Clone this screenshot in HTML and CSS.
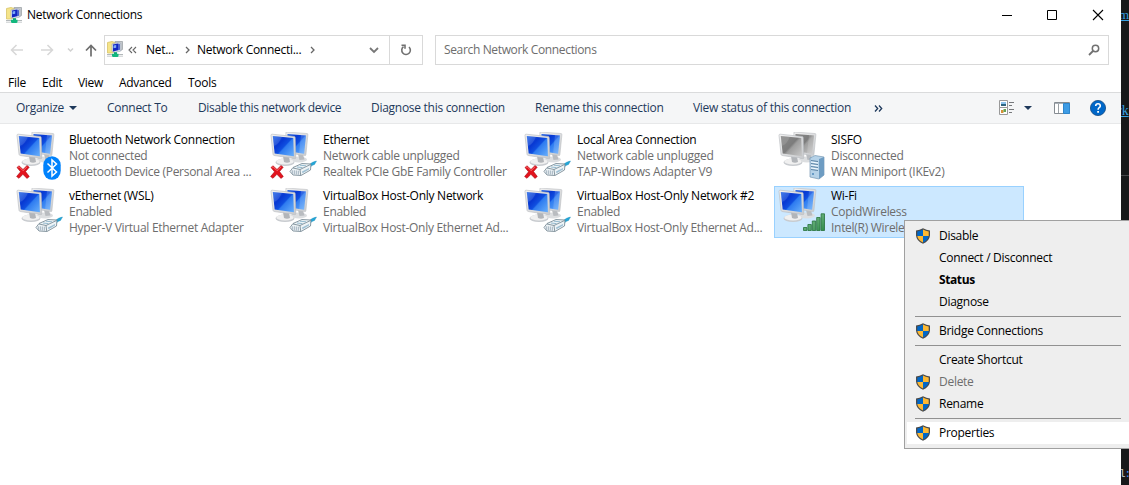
FILE: index.html
```html
<!DOCTYPE html>
<html lang="en">
<head>
<meta charset="utf-8">
<title>Network Connections</title>
<link rel="stylesheet" href="styles.css">
</head>
<body>
<svg class="defs" width="0" height="0" aria-hidden="true">
  <defs>
    <linearGradient id="blue" x1="0" y1="0" x2="1" y2=".9"><stop offset="0" stop-color="#2a6ce8"/><stop offset=".35" stop-color="#0838d2"/><stop offset=".55" stop-color="#0f4fe0"/><stop offset=".6" stop-color="#2e7bf0"/><stop offset="1" stop-color="#62aafa"/></linearGradient>
    <linearGradient id="gray" x1="0" y1="0" x2="1" y2=".9"><stop offset="0" stop-color="#8a8a8a"/><stop offset=".5" stop-color="#7c7c7c"/><stop offset=".58" stop-color="#9e9e9e"/><stop offset="1" stop-color="#c4c4c4"/></linearGradient>
    <linearGradient id="frame" x1="0" y1="0" x2="1" y2="1"><stop offset="0" stop-color="#f2f2f2"/><stop offset="1" stop-color="#c8cacd"/></linearGradient>
    <linearGradient id="green" x1="0" y1="0" x2="1" y2="1"><stop offset="0" stop-color="#8fcb9d"/><stop offset="1" stop-color="#2f8a4a"/></linearGradient>
    <symbol id="monitors" viewBox="0 0 48 48">
      <ellipse cx="29" cy="27.500" rx="8" ry="3" fill="#dcdee0"/>
      <path d="M28 22l5 .5 1.500 5-5 .5z" fill="#b9bcc0"/>
      <path d="M16 0l21 1.500q1 .1.900 1.200l-2 20q-.1 1-1.200.9L15 20.500z" fill="url(#frame)" stroke="#bcbfc3" stroke-width=".6"/>
      <path d="M17.500 2l18.500 1.400-1.900 18.300-17.600-2.700z" fill="var(--screen)"/>
      <path d="M31 3.100l5 .4-1.900 18.200-5-.8z" fill="#fff" opacity=".15"/>
      <ellipse cx="15" cy="30.300" rx="9.500" ry="3.700" fill="#c9ccd0"/>
      <ellipse cx="15" cy="29.500" rx="8.700" ry="3" fill="#f0f0f0"/>
      <path d="M13 24l6 .7 1 5.300q-3 1.500-6 0z" fill="#b2b5b9"/>
      <path d="M2.200 2.200l22 2.300q1 .1 1 1.100l.6 20q0 1.200-1.200 1L4.200 23.500q-1-.2-1.200-1.200L1 3.300q0-1.200 1.200-1.100z" fill="url(#frame)" stroke="#b6b9bd" stroke-width=".6"/>
      <path d="M2.800 3.900l20.500 2.200.6 18.200L4.700 21.600z" fill="var(--screen)"/>
      <path d="M2.800 3.900l9 1q-2.500 7-8 9z" fill="#fff" opacity=".12"/>
    </symbol>
    <symbol id="cross" viewBox="0 0 14 14">
      <path d="M1 2.500L3 .8 7 4.500 11 .6 13.200 2.200 9.500 6.600 13.300 11.500 11 13.400 6.900 9.300 3 13.300.6 11.500 4.600 6.800z" fill="#e3131d" stroke="#a90610" stroke-width=".6"/>
      <path d="M2 2.500L3 1.700 7 5.700 11.200 1.600" fill="none" stroke="#ff7b7b" stroke-width=".8"/>
    </symbol>
    <symbol id="plug" viewBox="0 0 28 18">
      <path d="M19 6q4-4.500 8.500-5L25.500 4.500Q22.500 5 21 7.500z" fill="#24a7d8" stroke="#178ab8" stroke-width=".4"/>
      <path d="M1 11.500L4 7.500 13 3.500l9 .5-.5 6L12 15.500 4 15z" fill="#edf3f6" stroke="#6f818d" stroke-width=".8"/>
      <path d="M11 9.500L21.500 4.500M11 9.500l.7 5.500M11 9.500L4 8" fill="none" stroke="#6f818d" stroke-width=".8"/>
      <path d="M3.300 10.300v3.500M5.300 10.300v4M7.300 10.500v4M9.300 10.700v4" stroke="#8da0ae" stroke-width=".8"/>
      <path d="M8 7l5.500.6M11 5.200l6 .6" fill="none" stroke="#8ab3ca" stroke-width=".9"/>
      <path d="M13 11.500l7-3.500v1.600l-6.500 3.600z" fill="#9fc0d3"/>
    </symbol>
    <symbol id="bluetooth" viewBox="0 0 18 24"><rect x=".3" y=".2" width="17.400" height="23.600" rx="8.700" ry="9" fill="#0082fc"/><path d="M4.500 7.500l9 8.500L9 20V4l4.500 4-9 8.500" fill="none" stroke="#fff" stroke-width="1.500"/></symbol>
    <symbol id="server" viewBox="0 0 16 25">
      <path d="M1 3l5-2.500L15 2v18l-5 4-9-2z" fill="#b5d2e8" stroke="#7596b2" stroke-width=".7"/>
      <path d="M10 4l5-2v18l-5 4z" fill="#6e9cc2"/>
      <path d="M2 5.500l7 1M2 8.500l7 1M2 11.500l7 1M2 14.500l7 1" stroke="#5d84a5"/>
      <path d="M2 7l7 1M2 10l7 1M2 13l7 1" stroke="#f3faff"/>
      <circle cx="4" cy="19" r="1" fill="#4f89bb"/>
    </symbol>
    <symbol id="signal" viewBox="0 0 22 18"><g fill="url(#green)" stroke="#24713a" stroke-width=".8"><path d="M.5 14.500h3.400v3H.5zM4.900 11.500h3.400v6H4.900zM9.300 8h3.400v9.500H9.300zM13.700 4.500h3.400v13h-3.400zM18.100.8h3.400v16.700h-3.400z"/></g></symbol>
    <symbol id="shield" viewBox="0 0 16 16">
      <path d="M8 .3Q4.500 2.300 1 2.500v5Q1.500 13 8 15.800 14.500 13 15 7.500v-5Q11.500 2.300 8 .3z" fill="#4b4b4b"/>
      <path d="M8 1.500Q5.300 3.200 2.300 3.600v4.300H8z" fill="#0067c8"/><path d="M8 1.500q2.700 1.700 5.700 2.100v4.300H8z" fill="#fdb933"/>
      <path d="M2.300 7.900Q3 12.300 8 14.500V7.900z" fill="#fdb933"/><path d="M13.700 7.900Q13 12.300 8 14.500V7.900z" fill="#0067c8"/>
    </symbol>
    <symbol id="netfolder" viewBox="0 0 16 16">
      <path d="M8 .5h7.500v8l-3 1.500z" fill="#c5c9cd" stroke="#a0a4a8" stroke-width=".8"/>
      <path d="M.5 1.500L5 .5l3 1v9l-3 1.500H.5z" fill="#f5e489" stroke="#d8c468" stroke-width=".8"/>
      <path d="M5 3l6-1.500 2.800 1V10L8 11.500 5 10.500z" fill="#d9dee6" stroke="#9ba4b5" stroke-width=".6"/>
      <path d="M6 3.600l5-1.100v6.700l-5 1.200z" fill="#1226c2"/><path d="M6.500 4.500l2.700-.6v2.800l-2.700.6z" fill="#7fabf8"/><path d="M11 2.500l2 .7v5.500l-2 .5z" fill="#4860cf"/>
      <path d="M7 11.200h3v2H7z" fill="#10a974"/><path d="M0 13h16v.9H0zM0 14.700h16v.8H0z" fill="#b2b8ba"/><path d="M5 12.800h6.500v2.400L10.500 16H6l-1-.8z" fill="#12b77d"/>
    </symbol>
  </defs>
</svg>
<div class="desktop">
  <main class="window">
    <header class="titlebar">
      <svg class="app-icon"><use href="#netfolder"/></svg>
      <span class="title">Network Connections</span>
      <svg class="controls" viewBox="0 0 104 12"><path d="M0 6.500h10" stroke="#000"/><path d="M45.500 1.500h9v9h-9z" fill="none" stroke="#000"/><path d="M91 1l10 10M101 1L91 11" stroke="#000" stroke-width="1.100"/></svg>
    </header>
    <nav class="address-row">
      <svg class="arrows" viewBox="0 0 92 14" fill="none">
        <path d="M13 7H1.500M6.500 2L1.500 7l5 5M31 7h11.500M37.500 2l5 5-5 5" stroke="#d7d7d7" stroke-width="1.500"/>
        <path d="M58 5.500l2.500 2.500L63 5.500" stroke="#d1d1d1" stroke-width="1.500"/>
        <path d="M81 13.500v-11M76 7.500l5-5 5 5" stroke="#6e6e6e" stroke-width="1.700"/>
      </svg>
      <div class="address">
        <svg class="app-icon"><use href="#netfolder"/></svg>
        <svg class="back-chev" viewBox="0 0 9 8"><path d="M4 1L1 4l3 3M8 1L5 4l3 3" fill="none" stroke="#666" stroke-width="1.100"/></svg>
        <span class="crumb-short">Net...</span>
        <svg class="chev" viewBox="0 0 5 8"><path d="M1 1l3 3-3 3" fill="none" stroke="#666" stroke-width="1.300"/></svg>
        <span class="crumb">Network Connecti...</span>
        <svg class="chev" viewBox="0 0 5 8"><path d="M1 1l3 3-3 3" fill="none" stroke="#666" stroke-width="1.300"/></svg>
        <svg class="drop" viewBox="0 0 10 7"><path d="M1 1l4 4 4-4" fill="none" stroke="#777" stroke-width="1.800"/></svg>
        <div class="refresh"><svg viewBox="0 0 12 12"><path d="M3.500 2.700A4.300 4.300 0 1 0 9 3M1.500 1.300h3.500v3.500" fill="none" stroke="#717171" stroke-width="1.600"/></svg></div>
      </div>
      <div class="search"><span>Search Network Connections</span><svg viewBox="0 0 12 12"><path d="M1 11l4-4" stroke="#717171" stroke-width="1.800"/><circle cx="7.500" cy="4.500" r="3.200" fill="none" stroke="#717171" stroke-width="1.500"/></svg></div>
    </nav>
    <nav class="menubar"><span class="m-file">File</span><span class="m-edit">Edit</span><span class="m-view">View</span><span class="m-adv">Advanced</span><span>Tools</span></nav>
    <div class="toolbar">
      <div class="command c-org"><span>Organize</span><svg class="triangle" viewBox="0 0 8 4"><path d="M0 0h8L4 4z" fill="#1e395b"/></svg></div>
      <span class="command c-con">Connect To</span><span class="command c-dis">Disable this network device</span><span class="command c-dia">Diagnose this connection</span><span class="command c-ren">Rename this connection</span><span class="command c-view">View status of this connection</span>
      <svg class="more" viewBox="0 0 9 7"><path d="M1 .5l2.700 3L1 6.500M5 .5l2.700 3L5 6.500" fill="none" stroke="#1e395b" stroke-width="1.300"/></svg>
      <svg class="view-icon" viewBox="0 0 16 16"><path d="M.5.500h8v7h-8zM.5 7.500h8v7h-8z" fill="#fff" stroke="#999"/><path d="M2 2h5v2H2z" fill="#8dc4ee"/><path d="M2 4h5v2H2z" fill="#2e6580"/><path d="M2 10h2.500v3H2z" fill="#d69037"/><path d="M4.500 9H7v3H4.500z" fill="#64a454"/><path d="M10 2.500h5M10 5.500h3M10 9.500h5M10 12.500h3" stroke="#77797c"/></svg>
      <svg class="triangle view-tri" viewBox="0 0 8 4"><path d="M0 0h8L4 4z" fill="#1e395b"/></svg>
      <svg class="pane" viewBox="0 0 16 12"><path d="M.5.500h15v11H.5z" fill="#fff" stroke="#858b91"/><path d="M1 1.500h14" stroke="#a9b0b7"/><path d="M4.500 2v9" stroke="#9ba1a6"/><path d="M9.500 1.500h6v10h-6z" fill="#3e9ce5" stroke="#2f86cc"/></svg>
      <svg class="help" viewBox="0 0 16 16"><circle cx="8" cy="8" r="7.600" fill="#0067c8" stroke="#174b82" stroke-width=".8"/><path d="M5.700 6Q5.700 3.800 8 3.800T10.300 6Q10.300 7 9.200 7.700T8.100 9.700" fill="none" stroke="#fff" stroke-width="1.600"/><path d="M7.200 11h1.800v1.800H7.200z" fill="#fff"/></svg>
    </div>
    <section class="connections">
      <article class="item"><svg class="net-icon" viewBox="0 0 48 48"><use href="#monitors" width="48" height="48"/><use href="#cross" y="33" width="14" height="14"/><use href="#bluetooth" x="27" y="24" width="18" height="24"/></svg><div class="info"><b>Bluetooth Network Connection</b><span>Not connected</span><span>Bluetooth Device (Personal Area ...</span></div></article>
      <article class="item"><svg class="net-icon" viewBox="0 0 48 48"><use href="#monitors" width="48" height="48"/><use href="#cross" y="33" width="14" height="14"/><use href="#plug" x="19" y="28" width="28" height="18"/></svg><div class="info"><b>Ethernet</b><span>Network cable unplugged</span><span>Realtek PCIe GbE Family Controller</span></div></article>
      <article class="item"><svg class="net-icon" viewBox="0 0 48 48"><use href="#monitors" width="48" height="48"/><use href="#cross" y="33" width="14" height="14"/><use href="#plug" x="19" y="28" width="28" height="18"/></svg><div class="info"><b>Local Area Connection</b><span>Network cable unplugged</span><span>TAP-Windows Adapter V9</span></div></article>
      <article class="item disconnected"><svg class="net-icon" viewBox="0 0 48 48"><use href="#monitors" width="48" height="48"/><use href="#server" x="31" y="23" width="16" height="25"/></svg><div class="info"><b>SISFO</b><span>Disconnected</span><span>WAN Miniport (IKEv2)</span></div></article>
      <article class="item"><svg class="net-icon" viewBox="0 0 48 48"><use href="#monitors" width="48" height="48"/><use href="#plug" x="19" y="28" width="28" height="18"/></svg><div class="info"><b>vEthernet (WSL)</b><span>Enabled</span><span>Hyper-V Virtual Ethernet Adapter</span></div></article>
      <article class="item"><svg class="net-icon" viewBox="0 0 48 48"><use href="#monitors" width="48" height="48"/><use href="#plug" x="19" y="28" width="28" height="18"/></svg><div class="info"><b>VirtualBox Host-Only Network</b><span>Enabled</span><span>VirtualBox Host-Only Ethernet Ad...</span></div></article>
      <article class="item"><svg class="net-icon" viewBox="0 0 48 48"><use href="#monitors" width="48" height="48"/><use href="#plug" x="19" y="28" width="28" height="18"/></svg><div class="info"><b>VirtualBox Host-Only Network #2</b><span>Enabled</span><span>VirtualBox Host-Only Ethernet Ad...</span></div></article>
      <article class="item selected"><svg class="net-icon" viewBox="0 0 48 48"><use href="#monitors" width="48" height="48"/><use href="#signal" x="25" y="25" width="22" height="18"/></svg><div class="info"><b>Wi-Fi</b><span>CopidWireless</span><span>Intel(R) Wireless</span></div></article>
    </section>
  </main>
  <aside class="behind"><span class="link link-a">m</span><span class="link link-b">rk</span><i class="rule"></i><span class="code">l<em>:</em></span></aside>
  <div class="context-menu">
    <div class="option"><svg><use href="#shield"/></svg><span>Disable</span></div>
    <div class="option"><i></i><span>Connect / Disconnect</span></div>
    <div class="option default"><i></i><span>Status</span></div>
    <div class="option"><i></i><span>Diagnose</span></div>
    <hr>
    <div class="option"><svg><use href="#shield"/></svg><span>Bridge Connections</span></div>
    <hr>
    <div class="option"><i></i><span>Create Shortcut</span></div>
    <div class="option disabled"><svg><use href="#shield"/></svg><span>Delete</span></div>
    <div class="option"><svg><use href="#shield"/></svg><span>Rename</span></div>
    <hr>
    <div class="option hover"><svg><use href="#shield"/></svg><span>Properties</span></div>
  </div>
</div>
</body>
</html>
```
FILE: styles.css
```css
* { box-sizing: border-box; }
body { margin: 0; overflow: hidden; font: 12px/16px "Open Sans", "Noto Sans", sans-serif; letter-spacing: -.28px; color: #000; }
svg { display: block; flex: none; }
.defs { position: absolute; }
.desktop { position: relative; display: flex; width: 1129px; height: 485px; overflow: hidden; background: #17181a; }
.window { flex: none; width: 1121px; background: #fff; white-space: nowrap; }
.app-icon { width: 16px; height: 16px; }
.titlebar { display: flex; align-items: center; height: 29px; padding: 0 15px 0 6px; }
.title { margin-left: 5px; flex: 1; padding-top: 1px; }
.controls { width: 104px; height: 12px; }
.address-row { display: flex; align-items: center; height: 42px; padding: 0 12px 0 10px; }
.arrows { width: 92px; height: 14px; margin-right: 2px; }
.address { display: flex; align-items: center; width: 319px; height: 30px; border: 1px solid #d9d9d9; padding-left: 2px; }
.address .app-icon { margin-top: -2px; }
.back-chev { width: 9px; height: 8px; margin-left: 5px; }
.crumb-short { width: 28px; margin: 0 11px 0 9px; }
.chev { width: 5px; height: 8px; }
.crumb { width: 105px; margin: 0 8px 0 7px; }
.drop { width: 10px; height: 7px; margin-left: auto; }
.refresh { display: grid; place-items: center; width: 33px; height: 28px; margin-left: 10px; border-left: 1px solid #d9d9d9; }
.refresh svg { width: 12px; height: 12px; }
.search { display: flex; align-items: center; justify-content: space-between; flex: 1; height: 30px; margin-left: 12px; padding: 0 8px; border: 1px solid #d9d9d9; letter-spacing: -.35px; color: #6d6d6d; }
.search svg { width: 12px; height: 12px; }
.menubar { display: flex; height: 21px; padding: 4px 8px 0; }
.m-file { width: 34px; } .m-edit { width: 36px; } .m-view { width: 41px; } .m-adv { width: 69px; }
.toolbar { display: flex; align-items: center; height: 32px; padding: 0 15px 0 16px; background: #f5f6f7; border-top: 1px solid #dadbdc; border-bottom: 1px solid #e7e8e9; color: #1e395b; }
.command { flex: none; }
.c-org { display: flex; align-items: center; justify-content: space-between; width: 61px; margin-right: 30px; }
.triangle { width: 8px; height: 4px; }
.c-con { width: 91px; } .c-dis { width: 173px; letter-spacing: -.35px; } .c-dia { width: 164px; } .c-ren { width: 158px; } .c-view { width: 181px; }
.more { width: 9px; height: 7px; }
.view-icon { width: 16px; height: 16px; margin-left: auto; }
.view-tri { margin: 0 22px 0 9px; }
.pane { width: 16px; height: 12px; margin-right: 20px; }
.help { width: 16px; height: 16px; }
.connections { display: grid; grid-template-columns: repeat(4, 250px); grid-auto-rows: 52px; gap: 4px; padding: 6px 0 0 12px; }
.item { --screen: url(#blue); display: flex; padding: 2px 0 0 4px; overflow: hidden; }
.item.disconnected { --screen: url(#gray); }
.item.selected { background: #cce8ff; outline: 1px solid #99d1ff; outline-offset: -1px; }
.net-icon { width: 48px; height: 48px; }
.info { display: flex; flex-direction: column; margin-left: 5px; letter-spacing: -.29px; color: #6d6d6d; }
.info b { font-weight: 400; letter-spacing: -.26px; color: #000; }
.behind { position: relative; width: 8px; overflow: hidden; font: 15px/18px "Liberation Serif", serif; letter-spacing: 0; color: #36a1e4; }
.link { position: absolute; text-decoration: underline; }
.link-a { top: 6px; left: -2px; font-size: 13px; } .link-b { top: 102px; left: -4px; font-size: 14px; }
.rule { position: absolute; top: 175px; width: 8px; height: 1px; background: #45474a; }
.code { position: absolute; top: 466px; left: -2px; font: 11px/16px "Liberation Mono", monospace; letter-spacing: -1px; color: #ccc; white-space: nowrap; }
.code em { color: #448cff; font-style: normal; }
.context-menu { position: absolute; left: 904px; top: 220px; width: 230px; height: 229px; padding: 4px 2px; background: #eee; border: 1px solid #a0a0a0; }
.option { display: flex; align-items: center; height: 22px; padding-left: 8px; white-space: nowrap; }
.option svg, .option i { width: 16px; height: 16px; margin-right: 8px; flex: none; }
.context-menu hr { height: 1px; margin: 3px 10px 3px 8px; border: 0; background: #919191; }
.default { font-weight: 700; letter-spacing: -.4px; }
.disabled { color: #6d6d6d; }
.hover { background: #fff; }
```
